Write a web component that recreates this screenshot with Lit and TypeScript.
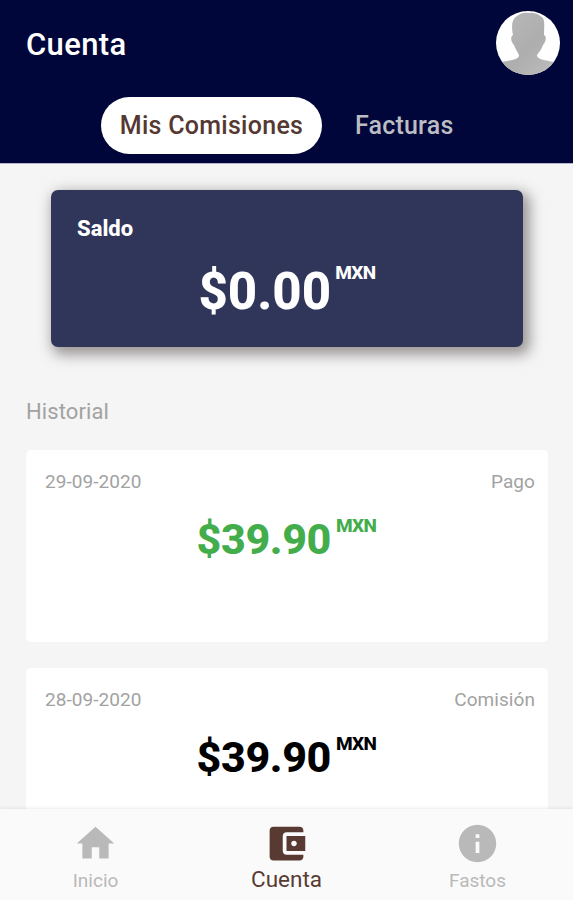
import { LitElement, html, css, svg } from "lit";
import { customElement, property } from "lit/decorators.js";

const icons = {
  home: svg`<path d="M10 20v-6h4v6h5v-8h3L12 3 2 12h3v8z"/>`,
  wallet: svg`<path d="M21 18v1c0 1.1-.9 2-2 2H5c-1.11 0-2-.9-2-2V5c0-1.1.89-2 2-2h14c1.1 0 2 .9 2 2v1h-9c-1.11 0-2 .9-2 2v8c0 1.1.89 2 2 2h9zm-9-2h10V8H12v8zm4-2.500c-.83 0-1.500-.67-1.500-1.500s.67-1.500 1.500-1.500 1.500.67 1.500 1.500-.67 1.500-1.500 1.500z"/>`,
  info: svg`<path d="M12 2C6.480 2 2 6.480 2 12s4.480 10 10 10 10-4.480 10-10S17.520 2 12 2zm1 15h-2v-6h2v6zm0-8h-2V7h2v2z"/>`,
};

@customElement("history-card")
class HistoryCard extends LitElement {
  @property() date = "";
  @property() kind = "";
  @property() amount = "";
  @property({ type: Boolean, reflect: true }) paid = false;

  static styles = css`
    :host { display: block; flex: none; height: 192px; box-sizing: border-box; background: #fff; border-radius: 5px; padding: 19px 13px 0 19px; color: #000; }
    :host([paid]) { color: #43ad4b; }
    .meta { display: flex; justify-content: space-between; font-size: 19px; line-height: 26px; color: #a2a2a2; letter-spacing: 0.06px; }
    .amount { display: flex; justify-content: center; align-items: flex-start; gap: 5px; margin-top: 17px; padding-right: 7px; font-weight: 800; font-size: 43px; line-height: 54px; letter-spacing: -0.4px; }
    .unit { font-size: 19px; line-height: 27px; letter-spacing: -0.6px; font-weight: 800; }
  `;

  render() {
    return html`
      <div class="meta"><span>${this.date}</span><span>${this.kind}</span></div>
      <div class="amount"><span>${this.amount}</span><span class="unit">MXN</span></div>
    `;
  }
}

@customElement("app-root")
class AppRoot extends LitElement {
  static styles = css`
    :host { display: flex; flex-direction: column; height: 900px; overflow: hidden; background: #f5f5f5; font-family: Roboto, sans-serif; }
    header { flex: none; height: 164px; background: #000639; border-bottom: 1px solid #b5b6cc; box-sizing: border-box; }
    .bar { display: flex; justify-content: space-between; align-items: flex-start; padding: 11px 13px 0 26px; height: 86px; box-sizing: border-box; }
    .title { font-size: 31px; font-weight: 500; line-height: 40px; color: #fff; margin-top: 14px; letter-spacing: 0.35px; }
    .avatar { width: 64px; height: 64px; display: block; }
    .tabs { display: flex; margin: 11px 0 0 101px; align-items: center; gap: 33px; font-size: 25px; font-weight: 500; color: #bcbdc3; }
    .tab { line-height: 55px; letter-spacing: 0.2px; }
    .tab.active { width: 221px; height: 57px; border-radius: 29px; background: #fff; color: #553832; display: flex; align-items: center; justify-content: center; letter-spacing: 0.28px; }
    main { flex: 1; min-height: 0; overflow: hidden; display: flex; flex-direction: column; padding: 26px 25px 0 26px; }
    .balance { flex: none; height: 157px; box-sizing: border-box; margin: 0 0 0 25px; width: 472px; border-radius: 7px; background: #30365a; color: #fff; padding: 25px 26px 0; box-shadow: 4px 5px 13px 3px rgba(70, 60, 60, 0.5); font-weight: 800; }
    .label { font-size: 22px; line-height: 27px; }
    .sum { display: flex; justify-content: center; gap: 4px; font-size: 51px; line-height: 60px; margin-top: 20px; align-items: flex-start; }
    .unit { font-size: 19px; line-height: 21px; letter-spacing: -0.6px; font-weight: 800; }
    .heading { font-size: 22px; line-height: 31px; color: #a2a2a2; margin: 49px 0 23px; letter-spacing: 0.1px; }
    .list { display: flex; flex-direction: column; gap: 26px; }
    nav { flex: none; height: 91px; display: grid; grid-template-columns: repeat(3, 1fr); background: #fafafa; box-shadow: 0 -1px 3px rgba(0, 0, 0, 0.08); position: relative; color: #b9b9b9; }
    .item { display: flex; flex-direction: column; align-items: center; padding-top: 12px; font-size: 19px; }
    .item svg { width: 45px; height: 45px; fill: currentColor; }
    .item span { line-height: 30px; }
    .item.current { color: #593a33; font-size: 22.500px; }
    .item.current span { line-height: 27px; }
  `;

  render() {
    return html`
      <header>
        <div class="bar">
          <div class="title">Cuenta</div>
          <svg class="avatar" viewBox="0 0 64 64">
            <defs>
              <clipPath id="round"><circle cx="32" cy="32" r="32"/></clipPath>
              <linearGradient id="tone" x1="0" y1="0" x2="1" y2="1"><stop offset="0" stop-color="#b9b9b9"/><stop offset="0.55" stop-color="#aeaeae"/><stop offset="1" stop-color="#bfbfbf"/></linearGradient>
            </defs>
            <g clip-path="url(#round)">
              <rect width="64" height="64" fill="#fff"/>
              <path fill="url(#tone)" d="M17 24C15 14 16 8 21 5C24 2 29 1 34 2C39 1 43 4 47 7C49 11 48 18 48 24C51 25 50 31 47 34C46 38 43 41 41 44C41 48 46 49 64 52V64H0V52C19 49 23 48 23 44C21 40 19 37 18 34C15 31 14 26 17 24Z"/>
            </g>
          </svg>
        </div>
        <div class="tabs"><div class="tab active">Mis Comisiones</div><div class="tab">Facturas</div></div>
      </header>
      <main>
        <section class="balance">
          <div class="label">Saldo</div>
          <div class="sum"><span>$0.00</span><span class="unit">MXN</span></div>
        </section>
        <div class="heading">Historial</div>
        <div class="list">
          <history-card date="29-09-2020" kind="Pago" amount="$39.90" paid></history-card>
          <history-card date="28-09-2020" kind="Comisión" amount="$39.90"></history-card>
        </div>
      </main>
      <nav>
        <div class="item"><svg viewBox="0 0 24 24">${icons.home}</svg><span>Inicio</span></div>
        <div class="item current"><svg viewBox="0 0 24 24">${icons.wallet}</svg><span>Cuenta</span></div>
        <div class="item"><svg viewBox="0 0 24 24">${icons.info}</svg><span>Fastos</span></div>
      </nav>
    `;
  }
}
